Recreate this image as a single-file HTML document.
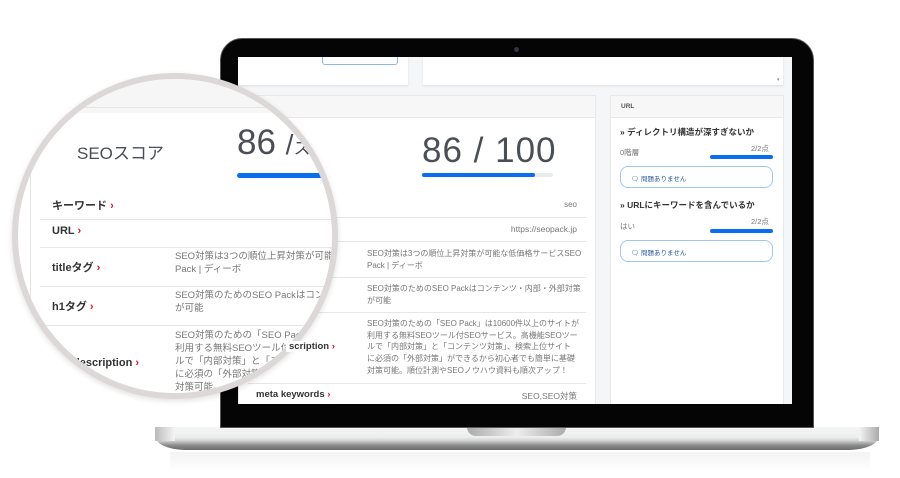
<!DOCTYPE html>
<html><head><meta charset="utf-8"><style>
*{margin:0;padding:0;box-sizing:border-box}
body{width:900px;height:478px;background:#fff;position:relative;overflow:hidden;font-family:"Liberation Sans","Noto Sans CJK JP",sans-serif;color:#333}
.a{position:absolute}
.g{color:#777}
.r{color:#e0102a;font-weight:bold}
.line{position:absolute;height:1px;background:#e6e6e6}
.nw{white-space:nowrap}
</style></head><body>
<!-- laptop base -->
<div class="a" style="left:155px;top:427px;width:724px;height:23px;border-radius:0 0 30px 30px/0 0 14px 14px;background:linear-gradient(#f4f5f5 0,#eceeee 45%,#cfd0d0 60%,#8a8a8a 80%,#6a6a6a 100%)"></div>
<div class="a" style="left:155px;top:427px;width:20px;height:14px;background:linear-gradient(90deg,#bbb,#f4f4f4)"></div>
<div class="a" style="left:859px;top:427px;width:20px;height:14px;background:linear-gradient(90deg,#f4f4f4,#aaa)"></div>
<div class="a" style="left:467px;top:427px;width:99px;height:9px;border-radius:0 0 10px 10px;background:linear-gradient(90deg,#aaa,#eee 50%,#aaa)"></div>
<div class="a" style="left:170px;top:452px;width:700px;height:20px;background:linear-gradient(#f3f3f3,#fff)"></div>
<!-- bezel -->
<div class="a" style="left:220px;top:38px;width:594px;height:390px;background:#050505;border-radius:22px 22px 0 0;border:1px solid #555"></div>
<div class="a" style="left:514px;top:47px;width:5px;height:5px;border-radius:50%;background:#334"></div>
<!-- screen -->
<div class="a" style="left:238px;top:57px;width:554px;height:347px;background:#f5f6f8;overflow:hidden">
  <div class="a" style="left:0;top:0;width:170px;height:28px;background:#fff;box-shadow:0 1px 2px #ddd"></div>
  <div class="a" style="left:84px;top:-4px;width:76px;height:12px;border:1px solid #8fb4ee;border-radius:3px"></div>
  <div class="a" style="left:185px;top:0;width:360px;height:28px;background:#fff;box-shadow:0 1px 2px #ddd"></div>
  <div class="a" style="left:539px;top:20px;font-size:5px;color:#888">▾</div>
  <div class="a" style="left:0;top:38px;width:358px;height:320px;background:#fff;border:1px solid #e8e8e8">
    <div style="height:22px;background:#f7f7f8;border-bottom:1px solid #e8e8e8"></div>
  </div>
  <div class="a" style="left:184px;top:74px;font-size:35px;color:#4a4f55;white-space:nowrap;letter-spacing:1px">86 / 100</div>
  <div class="a" style="left:184px;top:116px;width:131px;height:4px;background:#e9ecef;border-radius:2px"></div>
  <div class="a" style="left:184px;top:116px;width:113px;height:4px;background:#0a6ef0;border-radius:2px"></div>
  <div class="a g" style="right:215px;top:143px;font-size:8px">seo</div>
  <div class="line" style="left:10px;top:160px;width:338px"></div>
  <div class="a g" style="right:215px;top:167px;font-size:8.5px">https://seopack.jp</div>
  <div class="line" style="left:10px;top:184px;width:338px"></div>
  <div class="a g nw" style="left:129px;top:191px;font-size:8px;line-height:12px">SEO対策は3つの順位上昇対策が可能な低価格サービスSEO<br>Pack | ディーボ</div>
  <div class="line" style="left:10px;top:220px;width:338px"></div>
  <div class="a g nw" style="left:129px;top:226px;font-size:8px;line-height:12px">SEO対策のためのSEO Packはコンテンツ・内部・外部対策<br>が可能</div>
  <div class="line" style="left:10px;top:255px;width:338px"></div>
  <div class="a g nw" style="left:129px;top:261px;font-size:8px;line-height:11.7px">SEO対策のための「SEO Pack」は10600件以上のサイトが<br>利用する無料SEOツール付SEOサービス。高機能SEOツー<br>ルで「内部対策」と「コンテンツ対策」、検索上位サイト<br>に必須の「外部対策」ができるから初心者でも簡単に基礎<br>対策可能。順位計測やSEOノウハウ資料も順次アップ！</div>
  <div class="line" style="left:10px;top:326px;width:338px"></div>
  <div class="a" style="left:18px;top:332px;font-size:9.5px;font-weight:bold">meta keywords <span class="r">›</span></div>
  <div class="a g" style="right:215px;top:333px;font-size:8.5px">SEO,SEO対策</div>
  <div class="a" style="left:372px;top:38px;width:174px;height:320px;background:#fff;border:1px solid #e8e8e8">
    <div style="height:22px;background:#f7f7f8;border-bottom:1px solid #e8e8e8;font-size:6.5px;font-weight:bold;color:#555;padding:7px 0 0 10px">URL</div>
  </div>
  <div class="a" style="left:382px;top:69px;font-size:8.5px;font-weight:bold;white-space:nowrap">» ディレクトリ構造が深すぎないか</div>
  <div class="a g" style="left:382px;top:90px;font-size:7.5px">0階層</div>
  <div class="a g" style="left:513px;top:86px;font-size:7.5px">2/2点</div>
  <div class="a" style="left:472px;top:98px;width:63px;height:4px;background:#0a6ef0;border-radius:2px"></div>
  <div class="a" style="left:382px;top:109px;width:153px;height:22px;border:1px solid #9cc8f5;border-radius:8px;font-size:6.5px;color:#2a5aa0;padding:6px 0 0 10px">🗨 問題ありません</div>
  <div class="a" style="left:382px;top:142px;font-size:8.5px;font-weight:bold;white-space:nowrap">» URLにキーワードを含んでいるか</div>
  <div class="a g" style="left:382px;top:164px;font-size:7.5px">はい</div>
  <div class="a g" style="left:513px;top:159px;font-size:7.5px">2/2点</div>
  <div class="a" style="left:472px;top:172px;width:63px;height:4px;background:#0a6ef0;border-radius:2px"></div>
  <div class="a" style="left:382px;top:183px;width:153px;height:22px;border:1px solid #9cc8f5;border-radius:8px;font-size:6.5px;color:#2a5aa0;padding:6px 0 0 10px">🗨 問題ありません</div>
</div>
<!-- magnifier -->
<div class="a" style="left:12px;top:73px;width:326px;height:326px;border-radius:50%;overflow:hidden;background:#fff;border:6px solid #dcd8d8;box-shadow:0 2px 6px rgba(0,0,0,.12)">
  <div class="a" style="left:-12px;top:-6px;width:400px;height:40px;background:#f6f6f7"></div>
  <div class="a" style="left:12px;top:28px;width:400px;height:1px;background:#e6e6e6"></div>
  <div class="a" style="left:12px;top:28px;width:1px;height:300px;background:#e6e6e6"></div>
  <div class="a" style="left:59px;top:60px;font-size:17px;color:#4a4f55;white-space:nowrap">SEOスコア</div>
  <div class="a" style="left:219px;top:44px;font-size:35px;color:#4a4f55;white-space:nowrap">86 <span style="font-size:28px">/</span><span style="font-size:17px">スコア</span></div>
  <div class="a" style="left:219px;top:94px;width:90px;height:5px;background:#0a6ef0;border-radius:3px"></div>
  <div class="a" style="left:34px;top:118px;font-size:11px;font-weight:bold">キーワード <span class="r">›</span></div>
  <div class="line" style="left:22px;top:140px;width:320px"></div>
  <div class="a" style="left:34px;top:146px;font-size:11px;font-weight:bold">URL <span class="r">›</span></div>
  <div class="line" style="left:22px;top:168px;width:320px"></div>
  <div class="a" style="left:34px;top:180px;font-size:11px;font-weight:bold">titleタグ <span class="r">›</span></div>
  <div class="a g nw" style="left:157px;top:171px;font-size:9.5px;line-height:13px">SEO対策は3つの順位上昇対策が可能な低価格<br>Pack | ディーボ</div>
  <div class="line" style="left:22px;top:207px;width:320px"></div>
  <div class="a" style="left:34px;top:219px;font-size:11px;font-weight:bold">h1タグ <span class="r">›</span></div>
  <div class="a g nw" style="left:157px;top:210px;font-size:9.5px;line-height:13px">SEO対策のためのSEO Packはコンテンツ<br>が可能</div>
  <div class="line" style="left:28px;top:246px;width:320px"></div>
  <div class="a" style="left:55px;top:278px;font-size:11px;font-weight:bold">description <span class="r">›</span></div>
  <div class="a g nw" style="left:157px;top:250px;font-size:9.5px;line-height:13px">SEO対策のための「SEO Pack」は<br>利用する無料SEOツール付SEO<br>ルで「内部対策」と「コンテ<br>に必須の「外部対策」<br>対策可能。</div>
</div>
<div class="a" style="left:286px;top:341px;font-size:9.5px;font-weight:bold;background:#fff;padding-left:3px">scription <span class="r">›</span></div>
</body></html>
